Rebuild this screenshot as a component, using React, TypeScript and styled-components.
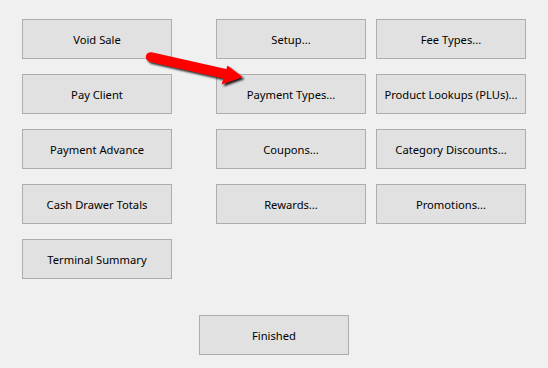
import styled, { createGlobalStyle } from 'styled-components';

const GlobalStyle = createGlobalStyle`
    html, body {
        margin: 0;
        padding: 0;
        background: #f0f0f0;
    }
    body {
        font-family: "Noto Sans", "Open Sans", sans-serif;
    }
`;

const leftButtons = ['Void Sale', 'Pay Client', 'Payment Advance', 'Cash Drawer Totals', 'Terminal Summary'];

const rightButtons = [
    'Setup...', 'Fee Types...',
    'Payment Types...', 'Product Lookups (PLUs)...',
    'Coupons...', 'Category Discounts...',
    'Rewards...', 'Promotions...'
];

export default function App() {
    return (
        <>
            <GlobalStyle />
            <Screen>
                <Main>
                    <LeftColumn>
                        {leftButtons.map(label => (
                            <Button key={label}>{label}</Button>
                        ))}
                    </LeftColumn>
                    <RightGrid>
                        {rightButtons.map(label => (
                            <Button key={label}>{label}</Button>
                        ))}
                    </RightGrid>
                </Main>
                <Footer>
                    <Button>Finished</Button>
                </Footer>
                <Arrow width="110" height="45" viewBox="0 0 110 45">
                    <defs>
                        <filter id="shadow" x="-20%" y="-50%" width="140%" height="200%">
                            <feGaussianBlur in="SourceAlpha" stdDeviation="1.3" />
                            <feOffset dx="1.5" dy="2" result="blur" />
                            <feComponentTransfer>
                                <feFuncA type="linear" slope="0.9" />
                            </feComponentTransfer>
                            <feMerge>
                                <feMergeNode />
                                <feMergeNode in="SourceGraphic" />
                            </feMerge>
                        </filter>
                    </defs>
                    <g filter="url(#shadow)">
                        <line x1="10.5" y1="12" x2="86" y2="29" stroke="#f00" strokeWidth="9.5" strokeLinecap="round" />
                        <polygon points="87.5,20.5 102.5,32 81.5,39.5" fill="#f00" />
                    </g>
                </Arrow>
            </Screen>
        </>
    );
}

const Screen = styled.div`
    position: relative;
    width: 548px;
    height: 368px;
    padding: 19px 0 0 22px;
    box-sizing: border-box;
    background: #f0f0f0;
`;

const Main = styled.div`
    display: flex;
    gap: 44px;
    align-items: flex-start;
`;

const LeftColumn = styled.div`
    display: flex;
    flex-direction: column;
    gap: 15px;
`;

const RightGrid = styled.div`
    display: grid;
    grid-template-columns: 150px 150px;
    gap: 15px 10px;
`;

const Footer = styled.div`
    display: flex;
    justify-content: center;
    margin: 36px 0 0 -22px;
`;

const Button = styled.button`
    width: 150px;
    height: 40px;
    box-sizing: border-box;
    padding: 0;
    border: 1px solid #adadad;
    border-radius: 0;
    background: #e1e1e1;
    color: #000;
    font-family: "Noto Sans", "Open Sans", sans-serif;
    font-size: 11.2px;
    text-align: center;
`;

const Arrow = styled.svg`
    position: absolute;
    left: 140px;
    top: 45px;
    overflow: visible;
`;
